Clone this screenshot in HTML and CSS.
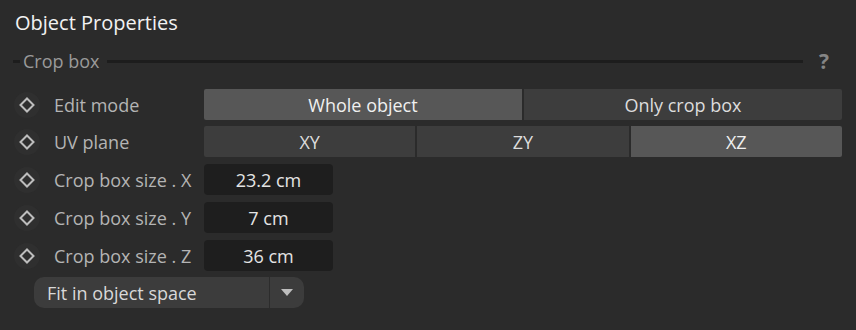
FILE: index.html
```html
<!DOCTYPE html>
<html>
<head>
    <title>Object Properties</title>
    <link rel="stylesheet" href="styles.css">
</head>
<body>
    <div class="panel">
        <h1 class="title">Object Properties</h1>

        <div class="section-head">
            <span class="rule rule-short"></span>
            <span class="section-name">Crop box</span>
            <span class="rule rule-long"></span>
            <span class="help">?</span>
        </div>

        <div class="prop-row tight">
            <span class="key"><svg viewBox="0 0 16 16"><path d="M8 1.5 L14.5 8 L8 14.5 L1.5 8 Z"/></svg></span>
            <span class="label">Edit mode</span>
            <div class="segments">
                <span class="seg active">Whole object</span>
                <span class="seg">Only crop box</span>
            </div>
        </div>

        <div class="prop-row">
            <span class="key"><svg viewBox="0 0 16 16"><path d="M8 1.5 L14.5 8 L8 14.5 L1.5 8 Z"/></svg></span>
            <span class="label">UV plane</span>
            <div class="segments">
                <span class="seg">XY</span>
                <span class="seg">ZY</span>
                <span class="seg active">XZ</span>
            </div>
        </div>

        <div class="prop-row">
            <span class="key"><svg viewBox="0 0 16 16"><path d="M8 1.5 L14.5 8 L8 14.5 L1.5 8 Z"/></svg></span>
            <span class="label">Crop box size . X</span>
            <span class="value">23.2 cm</span>
        </div>

        <div class="prop-row">
            <span class="key"><svg viewBox="0 0 16 16"><path d="M8 1.5 L14.5 8 L8 14.5 L1.5 8 Z"/></svg></span>
            <span class="label">Crop box size . Y</span>
            <span class="value">7 cm</span>
        </div>

        <div class="prop-row tight">
            <span class="key"><svg viewBox="0 0 16 16"><path d="M8 1.5 L14.5 8 L8 14.5 L1.5 8 Z"/></svg></span>
            <span class="label">Crop box size . Z</span>
            <span class="value">36 cm</span>
        </div>

        <div class="select">
            <span class="select-text">Fit in object space</span>
            <span class="select-arrow"><svg viewBox="0 0 12 8"><path d="M0 0 L12 0 L6 7 Z"/></svg></span>
        </div>
    </div>
</body>
</html>
```

FILE: styles.css
```css
body {
    margin: 0;
    background-color: #2b2b2b;
    font-family: "Open Sans", "Noto Sans", sans-serif;
    color: #b4b4b4;
}

.panel {
    padding: 8px 14px 0 14px;
}

.title {
    margin: 0 0 0 1px;
    font-size: 20px;
    font-weight: normal;
    color: #f2f2f2;
    line-height: 30px;
}

.section-head {
    display: flex;
    align-items: center;
    height: 30px;
    margin: 8px 0 13px 0;
}

.rule {
    height: 3px;
    background-color: #1d1d1d;
}

.rule-short {
    width: 7px;
    margin-left: -1px;
}

.rule-long {
    flex: 1;
    margin-left: 8px;
}

.section-name {
    margin-left: 3px;
    font-size: 18px;
    color: #9a9a9a;
}

.help {
    width: 36px;
    text-align: center;
    padding-left: 3px;
    font-size: 21px;
    font-weight: bold;
    color: #858585;
}

.prop-row {
    display: flex;
    align-items: center;
    height: 31px;
    margin-bottom: 7px;
}

.prop-row.tight {
    margin-bottom: 6px;
}

.key {
    width: 26px;
    height: 26px;
    border-radius: 50%;
    background-color: #2f2f2f;
    display: flex;
    align-items: center;
    justify-content: center;
    margin-right: 14px;
}

.key svg {
    width: 16px;
    height: 16px;
    fill: none;
    stroke: #bdbdbd;
    stroke-width: 2;
}

.label {
    width: 150px;
    font-size: 18px;
    white-space: nowrap;
}

.segments {
    flex: 1;
    display: flex;
    gap: 2px;
    height: 31px;
}

.seg {
    flex: 1;
    display: flex;
    align-items: center;
    justify-content: center;
    background-color: #3d3d3d;
    color: #dcdcdc;
    font-size: 18px;
}

.seg:first-child {
    border-radius: 2px 0 0 2px;
}

.seg:last-child {
    border-radius: 0 2px 2px 0;
}

.seg.active {
    background-color: #575757;
    color: #f0f0f0;
}

.value {
    width: 129px;
    height: 31px;
    display: flex;
    align-items: center;
    justify-content: center;
    background-color: #1e1e1e;
    border-radius: 4px;
    color: #e4e4e4;
    font-size: 18px;
}

.select {
    display: flex;
    width: 270px;
    height: 31px;
    margin-left: 20px;
    background-color: #3c3c3c;
    border-radius: 10px;
    color: #d8d8d8;
}

.select-text {
    flex: 1;
    display: flex;
    align-items: center;
    padding-left: 13px;
    font-size: 18px;
    border-right: 1px solid #2c2c2c;
}

.select-arrow {
    width: 34px;
    display: flex;
    align-items: center;
    justify-content: center;
}

.select-arrow svg {
    width: 12px;
    height: 8px;
    fill: #bdbdbd;
}
```
